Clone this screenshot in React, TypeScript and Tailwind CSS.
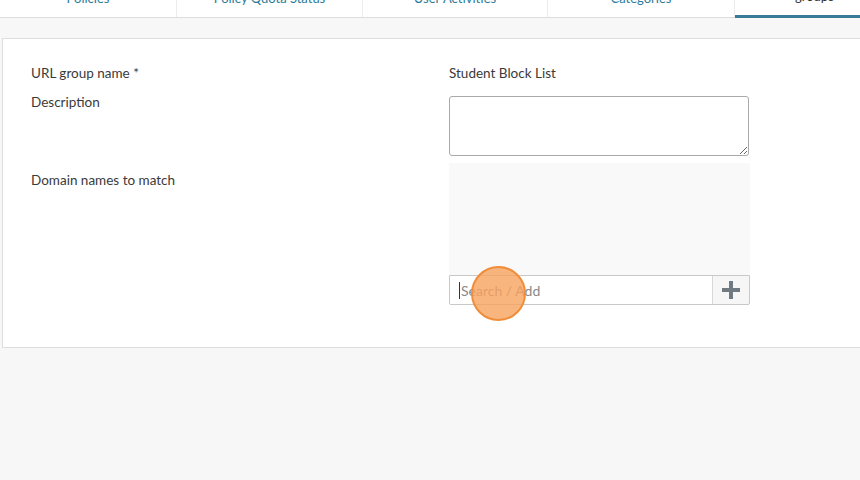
import React from "react";

const tabs = [
  { label: "Policies", w: "w-[177px]" },
  { label: "Policy Quota Status", w: "w-[186px]" },
  { label: "User Activities", w: "w-[185px]" },
  { label: "Categories", w: "w-[187px]" },
];

export default function App() {
  return (
    <div
      className="w-[860px] h-[480px] overflow-hidden bg-[#f7f7f7] text-[#3a3a3a] text-[13.5px]"
      style={{ fontFamily: "Lato, 'Liberation Sans', sans-serif" }}
    >
      {/* tab bar, mostly scrolled out of view */}
      <div className="flex h-[40px] -mt-[22px] bg-white border-b border-[#dcdcdc]">
        {tabs.map((t) => (
          <div
            key={t.label}
            className={`${t.w} shrink-0 flex items-end justify-center pb-[12px] border-r border-[#ececec] text-[#2a7a9a] text-[13px] leading-none`}
          >
            {t.label}
          </div>
        ))}
        <div className="flex-1 flex items-end pl-[60px] pb-[12px] border-b-[3px] border-[#3a7a99] text-[#333] text-[13px] leading-none -mb-px">
          URL groups
        </div>
      </div>

      {/* form card */}
      <div className="mt-[20px] ml-[2px] h-[310px] bg-white border border-[#dedede] border-r-0">
        <div className="grid grid-cols-[418px_1fr] pl-[28px] pt-[24px]">
          <div className="h-[20px] leading-[20px]">URL group name *</div>
          <div className="h-[20px] leading-[20px]">Student Block List</div>

          <div className="mt-[9px] leading-[20px]">Description</div>
          <div className="mt-[13px]">
            <textarea className="block w-[300px] h-[60px] border border-[#aaa] rounded-[3px] bg-white resize" />
          </div>

          <div className="mt-[14px] leading-[20px]">Domain names to match</div>
          <div className="mt-[7px] w-[301px]">
            <div className="h-[112px] bg-[#f9f9f9]" />
            <div className="relative flex h-[30px] border border-[#c8c8c8] rounded-b-[2px] bg-[#f6f6f6]">
              <div className="flex-1 flex items-center bg-white border-r border-[#d8d8d8] pl-[9px] text-[14px] text-[#8a8a8a]">
                <span className="w-px h-[17px] bg-[#333] mr-px" />
                Search / Add
              </div>
              <div className="w-[36px] flex items-center justify-center">
                <svg width="20" height="20" viewBox="0 0 20 20">
                  <path d="M8 1h4v7h7v4h-7v7H8v-7H1V8h7z" fill="#6f7a82" />
                </svg>
              </div>
              <div className="absolute left-[21px] top-[-10px] w-[55px] h-[55px] rounded-full bg-[#f7a35e]/80 border-2 border-[#ef8d3a]" />
            </div>
          </div>
        </div>
      </div>
    </div>
  );
}
